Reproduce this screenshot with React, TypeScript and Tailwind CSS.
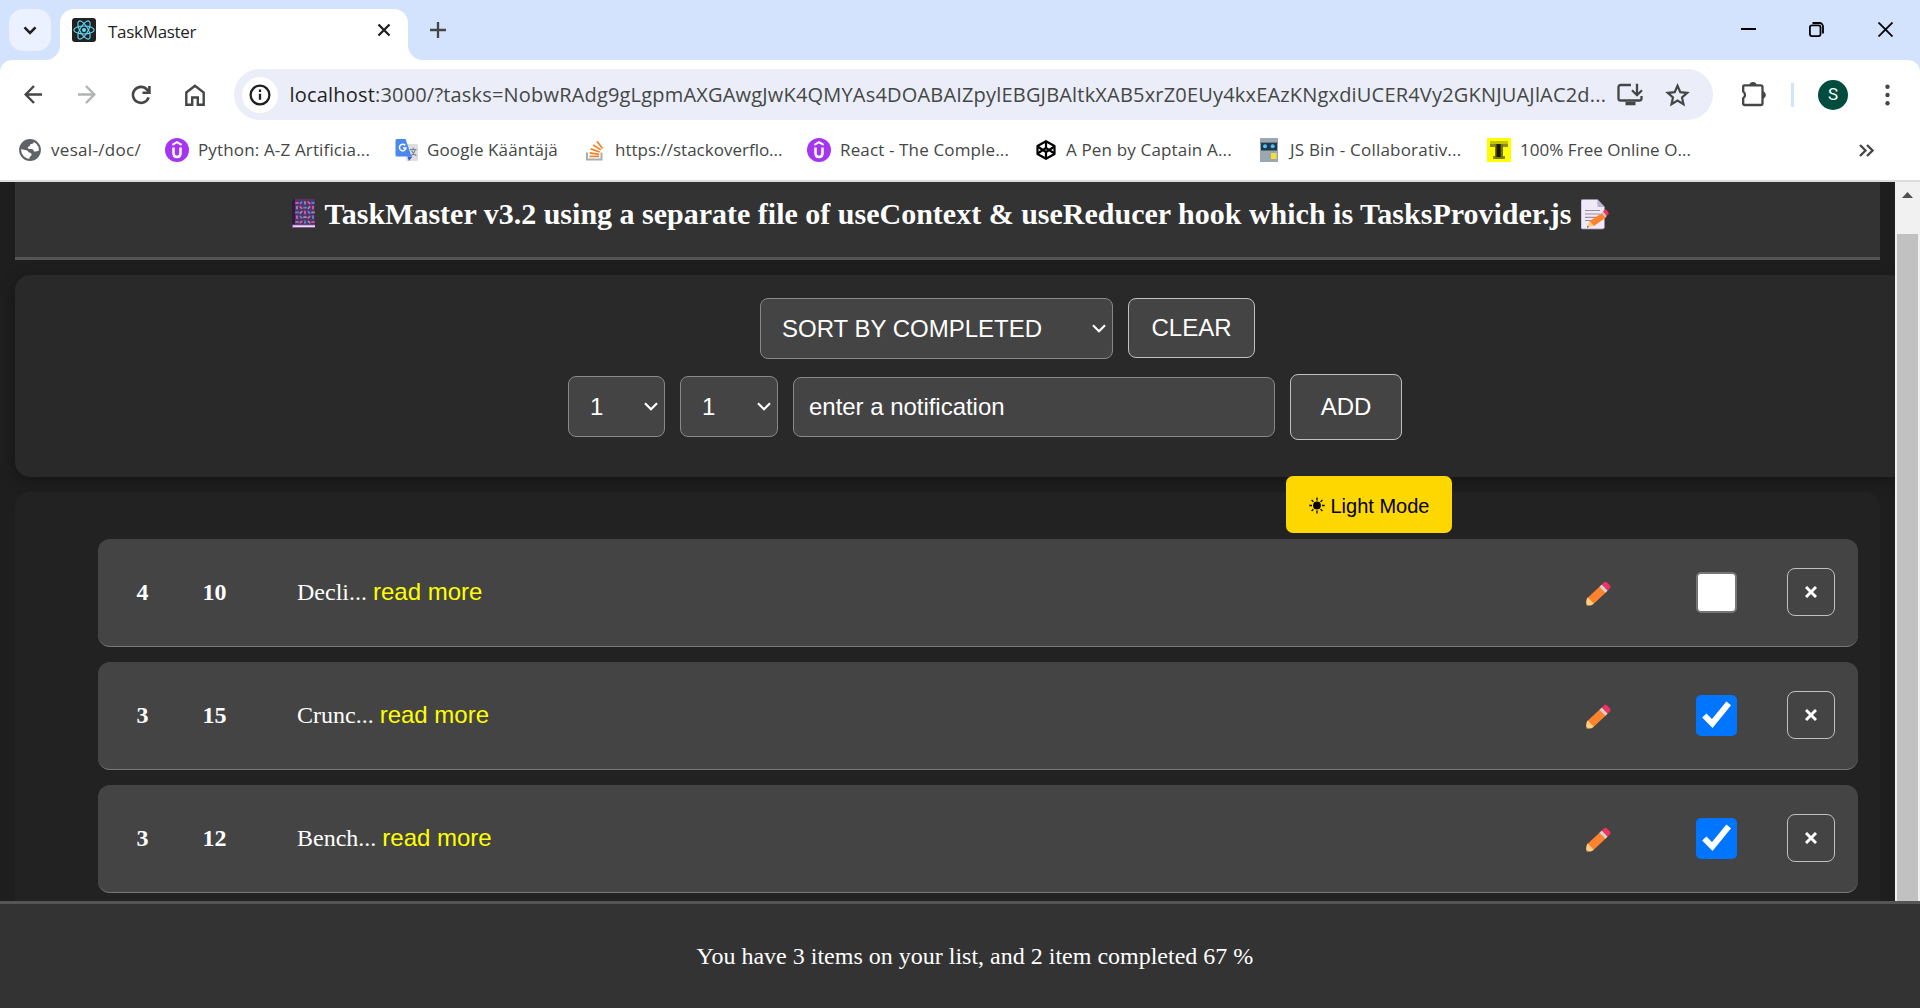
import type { ReactNode } from "react";

function ReactFavicon() {
  return (
    <svg width="24" height="24" viewBox="0 0 24 24" fill="none">
      <rect width="24" height="24" rx="3" fill="#222222" />
      <circle cx="12" cy="12" r="2" fill="#61dafb" />
      <g stroke="#61dafb" strokeWidth="1.1">
        <ellipse cx="12" cy="12" rx="10.2" ry="4" />
        <ellipse cx="12" cy="12" rx="10.2" ry="4" transform="rotate(60 12 12)" />
        <ellipse cx="12" cy="12" rx="10.2" ry="4" transform="rotate(120 12 12)" />
      </g>
    </svg>
  );
}

function GlobeIcon() {
  return (
    <svg width="22" height="22" viewBox="0 0 22 22" fill="none">
      <circle cx="11" cy="11" r="9.9" fill="#fff" stroke="#5f6368" strokeWidth="2" />
      <path
        d="M1.5 10C2 5 6 1.5 11 1.3c1.8 0 3 .4 4.2 1-.4 2-1.600 2.800-3.700 2.800-.3 1.800-1 2.700-2.800 2.900.2 1.700 1 2.200 3.300 2 2 .1 3 .9 2.800 2.600h2.200c1.200 0 2-.9 4-1 .2-2.600-.2-4.600-1.300-6.500.8 3 1.800 8-1 11.500-2 2.400-5.200 4-8.200 3.800-.6-1.600.5-3.300 2-3.900.2-1.800-.4-2.700-2.600-2.900-1.100-1.900-2-2.500-4-2.600z"
        fill="#5f6368"
      />
    </svg>
  );
}

function UdemyIcon() {
  return (
    <svg width="24" height="24" viewBox="0 0 24 24" fill="none" stroke="#fff">
      <circle cx="12" cy="12" r="12" fill="#a435f0" stroke="none" />
      <path d="M7.400 6.900 12 4.200l4.600 2.700" strokeWidth="2.100" />
      <path d="M8.500 9.600v5.600c0 2.300 1.300 3.700 3.500 3.700s3.500-1.400 3.500-3.700V9.600" strokeWidth="2.500" />
    </svg>
  );
}

function TranslateIcon() {
  return (
    <svg width="24" height="24" viewBox="0 0 24 24" fill="none">
      <rect x="11" y="6" width="12" height="17" rx="1.500" fill="#dedede" />
      <path d="M12.500 18.500h5l-3.600 4.500z" fill="#3a5bc7" />
      <path d="M2 1h8.500l6 17.500H2A1.500 1.500 0 0 1 .5 17V2.500A1.500 1.500 0 0 1 2 1z" fill="#4a87ee" />
      <path d="M10.300 7.400A3.300 3.300 0 1 0 11 10H8" stroke="#fff" strokeWidth="1.500" />
      <path d="M15 11.500h6.500M18.200 9.800v1.700M20.300 11.500c-.7 3-2.300 5-4.300 6.200M16.600 12.500c1 2.400 2.800 4.200 4.800 5.200" stroke="#6d8392" strokeWidth="1.100" />
    </svg>
  );
}

function StackOverflowIcon() {
  return (
    <svg width="18" height="21" viewBox="0 0 18 21" fill="none">
      <path d="M1 12.500v7h14.500v-7" stroke="#a9adb0" strokeWidth="2" />
      <g stroke="#f48024" strokeWidth="1.700">
        <path d="M3.500 16.400H13" />
        <path d="m3.700 12.800 9.400 1.500" />
        <path d="m4.700 8.900 9 3.100" />
        <path d="m7.100 5 7.800 4.900" />
        <path d="m10.900 1.200 5.600 7.200" />
      </g>
    </svg>
  );
}

function CodepenIcon() {
  return (
    <svg width="20" height="20" viewBox="0 0 20 20" fill="none" stroke="#000" strokeWidth="2.200" strokeLinejoin="round">
      <path d="M10 1.200 18.500 6v8L10 18.800 1.500 14V6z" />
      <path d="M1.500 6.500 10 12l8.500-5.500M1.500 13.500 10 8l8.500 5.500M10 1.200V8M10 12v6.800" />
    </svg>
  );
}

function JsBinIcon() {
  return (
    <svg width="18" height="24" viewBox="0 0 18 24">
      <rect width="18" height="24" fill="#9ba8b1" />
      <rect y="4" width="18" height="1" fill="#6f7f89" />
      <rect x="1" y="5" width="16" height="7.500" fill="#1f3a4a" />
      <circle cx="5" cy="8.300" r="2" fill="#4fc3f7" />
      <circle cx="12.700" cy="8.300" r="2" fill="#4fc3f7" />
      <rect x="11" y="15" width="5.500" height="6" fill="#f7dd35" />
    </svg>
  );
}

function HighlighterIcon() {
  return (
    <svg width="24" height="24" viewBox="0 0 24 24">
      <rect width="24" height="24" fill="#ffff00" />
      <path d="M3 3h18v3H3z" fill="#c4c400" />
      <path d="M3 6h3v3H3zM18 6h3v3h-3zM6 6h3v3H6zM15 6h3v3h-3zM6 18h3v3H6zM15 18h3v3h-3z" fill="#8c8c1a" />
      <path d="M8 6h8v15H8z" fill="#77771a" />
      <path d="M9.500 6h4.200v13H9.500z" fill="#1a1a08" />
    </svg>
  );
}

function NotebookEmoji() {
  const colors = ["#e85bb5", "#4c8df0", "#9a94a3"];
  const cells: ReactNode[] = [];
  for (let r = 0; r < 5; r++) {
    for (let c = 0; c < 5; c++) {
      const x = 5 + c * 4;
      const y = 3.800 + r * 4.800;
      cells.push(
        <path
          key={`${r}-${c}`}
          d={`M${x - 1} ${y}h2`}
          transform={`rotate(${((r * 2 + c * 3) % 4) * 45} ${x} ${y})`}
          stroke={colors[(r * 2 + c) % 3]}
          strokeWidth="1.700"
          strokeLinecap="round"
        />,
      );
    }
  }
  return (
    <svg width="24" height="30" viewBox="0 0 24 30" className="shrink-0">
      <path d="M2 0h20.500v26H1v3.500H0V2a2 2 0 0 1 2-2z" fill="#533566" />
      <path d="M0 1.500 1.500 0H3v25.500H0z" fill="#321b41" />
      <path d="M0 25.500h23V29H0z" fill="#7b4a95" />
      <path d="M1 26.300h22v1.800H1z" fill="#e6dfea" />
      {cells}
    </svg>
  );
}

function MemoEmoji() {
  return (
    <svg width="28" height="31" viewBox="0 0 28 31" className="shrink-0">
      <path d="M1.500.5h15L23.500 8v20a2 2 0 0 1-2 2h-20a1.500 1.500 0 0 1-1.500-1.500V2A1.500 1.500 0 0 1 1.500.5z" fill="#f0eaf7" stroke="#998ea4" strokeWidth=".8" />
      <path d="M16.300.5 23.500 8h-5.700a1.500 1.500 0 0 1-1.500-1.500z" fill="#bdb2cb" />
      <path d="M4 11.500h15M4 15h15M4 18.300h13M4 21.500h9" stroke="#998ea4" strokeWidth="1.200" />
      <path d="m21.400 13.700 3.600 4.900-12 8.400-4.200-1-.8-3.600z" fill="#ff822d" />
      <path d="m8.300 21.600 4.700 5.400-6.700 1.600z" fill="#ffce7c" />
      <path d="m20.300 13.400 2-1.500 3.800 5.200-2 1.500z" fill="#cdc4d6" />
      <path d="m22 12.200 1.200-1.200c.9-.8 1.800-.7 2.500.1l1.700 2.300c.6.9.4 1.700-.4 2.300l-1.400 1z" fill="#f92f60" />
      <path d="m6.700 26.600 1 1.600-1.600.4z" fill="#402a32" />
    </svg>
  );
}

function PencilEmoji() {
  return (
    <svg width="25" height="25" viewBox="0 0 25 25">
      <path d="m14.800 4.600 6 6L7.200 23.300.9 17.500z" fill="#ff822d" />
      <path d="m1.800 16.500 6 6.200c-1.500 1.600-3.700 1.800-6.900 1.700-.8 0-.9-.5-.8-1.300.1-2.800.2-5.100 1.700-6.600z" fill="#ffce7c" />
      <path d="m15.900 3.500 5.800 6-2.300 2.200-5.900-5.900z" fill="#d3d3d3" />
      <path d="m15.900 3.500 1.900-2c1-1 2.200-1 3.100-.1l2.900 2.900c1 1 .9 2.200 0 3.100l-2.100 2.100z" fill="#f92f60" />
      <path d="M.5 24.300 0 22.500l1.800 1.900z" fill="#5a3a2e" />
    </svg>
  );
}

function SunIcon() {
  return (
    <svg width="16" height="17" viewBox="0 0 16 17" className="shrink-0" stroke="#000" strokeWidth="1.300">
      <circle cx="8" cy="8.500" r="3.900" fill="#000" stroke="none" />
      <path d="M8 .5v3M8 13.500v3M.3 8.500h2.700M13 8.500h2.700M2.600 3l1.800 1.900M11.600 12.100l1.800 1.900M2.600 14l1.800-1.900M11.600 4.900 13.400 3" />
    </svg>
  );
}

function SelectChevron() {
  return (
    <svg width="14" height="9" viewBox="0 0 14 9" fill="none" stroke="#fff" strokeWidth="2.200" className="shrink-0">
      <path d="m1 1.300 6 6 6-6" />
    </svg>
  );
}

function TabStrip() {
  return (
    <div className="flex h-[60px] bg-[#d3e2fd]">
      <button className="ml-[9px] mt-[9px] flex h-[42px] w-[42px] items-center justify-center rounded-[14px] bg-[#ebf1fe]">
        <svg width="14" height="9" viewBox="0 0 14 9" fill="none" stroke="#1f1f1f" strokeWidth="2.600">
          <path d="m1.500 1.300 5.500 5.500 5.500-5.500" />
        </svg>
      </button>
      <div className="-ml-[6px] mt-[45px] h-[15px] w-[15px] bg-[radial-gradient(circle_at_0_0,transparent_14.5px,#fff_15.500px)]" />
      <div className="mt-[9px] flex h-[51px] w-[348px] items-center rounded-t-[14px] bg-white pb-[9px] pl-[12px]">
        <ReactFavicon />
        <span className="ml-[12px] mt-[3px] font-['Open_Sans'] text-[17px] tracking-[-0.3px] text-[#1f1f1f]">TaskMaster</span>
        <svg width="14" height="14" viewBox="0 0 14 14" stroke="#1f1f1f" strokeWidth="2.300" className="ml-auto mr-[17px]">
          <path d="m1.500 1.500 11 11M12.500 1.500l-11 11" />
        </svg>
      </div>
      <div className="mt-[45px] h-[15px] w-[15px] bg-[radial-gradient(circle_at_100%_0,transparent_14.500px,#fff_15.500px)]" />
      <svg width="16" height="16" viewBox="0 0 16 16" stroke="#444746" strokeWidth="2.300" className="ml-[7px] mt-[22px]">
        <path d="M8 0v16M0 8h16" />
      </svg>
      <svg width="15" height="15" viewBox="0 0 15 15" stroke="#000" strokeWidth="2" className="ml-auto mt-[22px]">
        <path d="M0 7h15" />
      </svg>
      <svg width="15" height="15" viewBox="0 0 15 15" fill="none" stroke="#000" strokeWidth="1.800" className="ml-[53px] mt-[22px]">
        <rect x=".9" y="3.300" width="10.600" height="10.800" rx="2" />
        <path d="M3.500 1h7a3.500 3.500 0 0 1 3.500 3.500v7" />
      </svg>
      <svg width="15" height="15" viewBox="0 0 15 15" stroke="#000" strokeWidth="1.800" className="ml-[54px] mr-[27px] mt-[22px]">
        <path d="m.5.500 14 14M14.500.5l-14 14" />
      </svg>
    </div>
  );
}

function AddressBar() {
  return (
    <div className="bg-[#d3e2fd]">
      <div className="flex h-[69px] items-center rounded-t-[12px] bg-white text-[#444746]">
        <svg width="18" height="19" viewBox="0 0 18 19" fill="none" stroke="#444746" strokeWidth="2.400" className="ml-[24px]">
          <path d="M18 9.500H2M10 1 1.700 9.500 10 18" />
        </svg>
        <svg width="18" height="19" viewBox="0 0 18 19" fill="none" stroke="#b1b2b2" strokeWidth="2.400" className="ml-[36px]">
          <path d="M0 9.500h16M8 1l8.300 8.500L8 18" />
        </svg>
        <svg width="20" height="20" viewBox="0 0 20 20" fill="none" stroke="#444746" strokeWidth="2.600" className="ml-[35px]">
          <path d="M17.600 12.300A8 8 0 1 1 16 4.600l1.600 1.800" />
          <path d="M18.400 1v6.800h-6.900" />
        </svg>
        <svg width="20" height="22" viewBox="0 0 20 22" fill="none" stroke="#444746" strokeWidth="2.400" className="ml-[34px]">
          <path d="M1.300 8.500 10 1.700l8.700 6.800v12.200h-5.900v-7.200H7.200v7.200H1.300z" />
        </svg>
        <div className="ml-[29px] flex h-[51px] w-[1479px] items-center rounded-full bg-[#ebeef8]">
          <div className="ml-[8px] flex h-[36px] w-[36px] shrink-0 items-center justify-center rounded-full bg-white">
            <svg width="22" height="22" viewBox="0 0 22 22" fill="none" stroke="#1f1f1f" strokeWidth="2.300">
              <circle cx="11" cy="11" r="9.400" />
              <path d="M11 9.800v6M11 5.600v2.300" />
            </svg>
          </div>
          <span className="ml-[11.5px] whitespace-nowrap font-['Open_Sans'] text-[20px] tracking-[0.185px]">
            <span className="text-[#1f1f1f]">localhost</span>
            :3000/?tasks=NobwRAdg9gLgpmAXGAwgJwK4QMYAs4DOABAIZpylEBGJBAltkXAB5xrZ0EUy4kxEAzKNgxdiUCER4Vy2GKNJUAJlAC2d...
          </span>
          <svg width="26" height="23" viewBox="0 0 26 23" fill="none" stroke="#444746" strokeWidth="2.300" className="ml-auto shrink-0">
            <path d="M14 2H3.500A2 2 0 0 0 1.500 4v11.500a2 2 0 0 0 2 2h19a2 2 0 0 0 2-2V13" />
            <path d="M8.500 20.500h10" strokeWidth="3.500" />
            <path d="M20 .8v11M15 7.300l5 4.900 5-4.900" />
          </svg>
          <svg width="25" height="24" viewBox="0 0 25 24" fill="none" stroke="#444746" strokeWidth="2.200" className="ml-[22px] mr-[23px] shrink-0">
            <path d="m12.500 2.800 2.800 6.400 6.900.6-5.200 4.600 1.500 6.800-6-3.600-6 3.600L8 14.400 2.800 9.800l6.900-.6z" />
          </svg>
        </div>
        <svg width="26" height="26" viewBox="0 0 26 26" fill="none" stroke="#444746" strokeWidth="2.300" className="mb-[2px] ml-[28px]">
          <path d="M3.500 4.300h16.200a1.800 1.800 0 0 1 1.800 1.800v16.100a1.800 1.800 0 0 1-1.800 1.800H3.500A1.300 1.300 0 0 1 2.200 22.700v-5.500a3.900 3.900 0 0 0 0-6.600V5.600a1.300 1.300 0 0 1 1.300-1.300z" />
          <path d="M9 4a3.100 3.100 0 0 1 6 0zM22 11a3.200 3.200 0 0 1 0 6z" fill="#444746" strokeWidth="1.600" />
        </svg>
        <div className="ml-[24px] h-[24px] w-[3px] bg-[#d3e2fd]" />
        <div className="ml-[24px] flex h-[30px] w-[30px] items-center justify-center rounded-full bg-[#004d40] font-[Roboto] text-[17px] text-white">S</div>
        <svg width="5" height="22" viewBox="0 0 5 22" fill="#444746" className="ml-[36.5px]">
          <circle cx="2.500" cy="2.700" r="2.200" />
          <circle cx="2.500" cy="11" r="2.200" />
          <circle cx="2.500" cy="19.300" r="2.200" />
        </svg>
      </div>
    </div>
  );
}

function Bookmark({ icon, className, children }: { icon: ReactNode; className: string; children: string }) {
  return (
    <div className={`flex shrink-0 items-center whitespace-nowrap ${className}`}>
      {icon}
      <span>{children}</span>
    </div>
  );
}

function BookmarksBar() {
  return (
    <div className="flex h-[53px] items-center border-b-2 border-[#dddddd] bg-white pb-[9px] pl-[19px] font-['Open_Sans'] text-[17px] text-[#444746]">
      <Bookmark icon={<GlobeIcon />} className="w-[146px] gap-[10px] tracking-[0.31px]">vesal-/doc/</Bookmark>
      <Bookmark icon={<UdemyIcon />} className="w-[230px] gap-[9px] tracking-[0.147px]">Python: A-Z Artificia...</Bookmark>
      <Bookmark icon={<TranslateIcon />} className="w-[191px] gap-[8px] tracking-[0.11px]">Google Kääntäjä</Bookmark>
      <Bookmark icon={<StackOverflowIcon />} className="w-[221px] gap-[11px]">https://stackoverflo...</Bookmark>
      <Bookmark icon={<UdemyIcon />} className="w-[229px] gap-[9px] tracking-[0.14px]">React - The Comple...</Bookmark>
      <Bookmark icon={<CodepenIcon />} className="w-[224px] gap-[10px] tracking-[0.16px]">A Pen by Captain A...</Bookmark>
      <Bookmark icon={<JsBinIcon />} className="w-[227px] gap-[12px] tracking-[0.2px]">JS Bin - Collaborativ...</Bookmark>
      <Bookmark icon={<HighlighterIcon />} className="gap-[9px] tracking-[0.04px]">100% Free Online O...</Bookmark>
      <svg width="15" height="13" viewBox="0 0 15 13" fill="none" stroke="#444746" strokeWidth="2.300" className="ml-auto mr-[46px]">
        <path d="m1 1 5.500 5.500L1 12M8 1l5.500 5.500L8 12" />
      </svg>
    </div>
  );
}

function NumberSelect({ className }: { className: string }) {
  return (
    <button className={`mb-px flex h-[61px] items-center justify-between rounded-[8px] border border-[#888888] bg-[#444444] pl-[21px] pr-[6px] ${className}`}>
      <span className="pt-px">1</span>
      <SelectChevron />
    </button>
  );
}

function Controls() {
  return (
    <section className="ml-[15px] mt-[15px] h-[202px] rounded-l-[15px] bg-[#292929] pt-[22px] font-['Liberation_Sans'] text-[24px] leading-none text-white shadow-[0_4px_15px_rgba(0,0,0,0.3)]">
      <div className="flex pl-[745px]">
        <button className="mt-px flex h-[61px] w-[353px] items-center justify-between rounded-[8px] border border-[#888888] bg-[#444444] pl-[21px] pr-[6px]">
          SORT BY COMPLETED
          <SelectChevron />
        </button>
        <button className="ml-[15px] mt-px h-[60px] w-[127px] rounded-[8px] border border-[#c0c0c0] bg-[#444444]">CLEAR</button>
      </div>
      <div className="mt-[15px] flex items-center pl-[553px]">
        <NumberSelect className="w-[97px]" />
        <NumberSelect className="ml-[15px] w-[98px]" />
        <div className="ml-[15px] flex h-[60px] w-[482px] items-center rounded-[8px] border border-[#888888] bg-[#444444] pl-[15px] tracking-[-0.03px]">enter a notification</div>
        <button className="ml-[15px] h-[66px] w-[112px] rounded-[8px] border border-[#c0c0c0] bg-[#444444]">ADD</button>
      </div>
    </section>
  );
}

const tasks = [
  { qty: 4, minutes: 10, title: "Decli...", done: false },
  { qty: 3, minutes: 15, title: "Crunc...", done: true },
  { qty: 3, minutes: 12, title: "Bench...", done: true },
];

function Checkbox({ checked }: { checked: boolean }) {
  if (!checked) {
    return <div className="h-[41px] w-[41px] rounded-[5px] border-[2.500px] border-[#767676] bg-white" />;
  }
  return (
    <div className="h-[41px] w-[41px] rounded-[5px] bg-[#0075ff]">
      <svg width="41" height="41" viewBox="0 0 41 41" fill="none" stroke="#fff" strokeWidth="6">
        <path d="m8.300 20.500 8 8L32.700 8.300" />
      </svg>
    </div>
  );
}

function TaskRow({ task }: { task: (typeof tasks)[number] }) {
  return (
    <li className="flex h-[108px] items-center rounded-[12px] border-b border-[#777777] bg-[#444444] pr-[23px] font-['Liberation_Serif'] text-[24px] text-white">
      <span className="mb-[2px] ml-[38.5px] w-[66px] font-bold">{task.qty}</span>
      <span className="mb-[2px] w-[94.5px] font-bold">{task.minutes}</span>
      <span className="mb-[2px]">
        {task.title} <button className="font-['Liberation_Sans'] text-[#ffff00]">read more</button>
      </span>
      <div className="ml-auto pt-px">
        <PencilEmoji />
      </div>
      <div className="ml-[85px]">
        <Checkbox checked={task.done} />
      </div>
      <button className="mb-[2px] ml-[50px] flex h-[48px] w-[48px] items-center justify-center rounded-[8px] border border-[#c0c0c0]">
        <svg width="12" height="12" viewBox="0 0 12 12" stroke="#fff" strokeWidth="2.900">
          <path d="m1 1 10 10M11 1 1 11" />
        </svg>
      </button>
    </li>
  );
}

export default function App() {
  return (
    <div className="flex h-[1008px] w-[1920px] flex-col overflow-hidden bg-[#1e1e1e]">
      <TabStrip />
      <AddressBar />
      <BookmarksBar />
      <div className="flex h-[719px] overflow-hidden">
        <main className="relative w-[1895px] overflow-hidden">
          <header className="mx-[15px] flex h-[78px] items-center border-b-[3px] border-[#555555] bg-[#333333] pb-[11px] pl-[277px] text-white">
            <NotebookEmoji />
            <h1 className="ml-[8.5px] mr-[9px] whitespace-nowrap font-['Liberation_Serif'] text-[30px] font-bold leading-[34px]">
              TaskMaster v3.2 using a separate file of useContext &amp; useReducer hook which is TasksProvider.js
            </h1>
            <MemoEmoji />
          </header>
          <Controls />
          <section className="relative mx-[15px] mt-[15px] h-[600px] rounded-[15px] bg-[#222222] pl-[83px] pr-[22px] pt-[47px]">
            <ul className="flex flex-col gap-[15px]">
              {tasks.map((task) => (
                <TaskRow key={task.title} task={task} />
              ))}
            </ul>
          </section>
          <button className="absolute left-[1286px] top-[294px] flex h-[57px] w-[166px] items-center rounded-[7px] bg-[#ffd700] pl-[23px] pt-[2px] font-['Liberation_Sans'] text-[20px] text-black">
            <SunIcon />
            <span className="ml-[5.5px] whitespace-nowrap">Light Mode</span>
          </button>
        </main>
        <div className="flex w-[25px] flex-col bg-[#f1f1f1] pl-[2px] pr-[2px]">
          <svg width="11" height="6" viewBox="0 0 11 6" fill="#505050" className="ml-[5px] mt-[10px]">
            <path d="M5.500 0 11 6H0z" />
          </svg>
          <div className="mt-[36px] flex-1 bg-[#c1c1c1]" />
        </div>
      </div>
      <footer className="flex h-[107px] items-center border-t-[3px] border-[#555555] bg-[#333333] pl-[696.5px] font-['Liberation_Serif'] text-[24px] text-white">
        You have 3 items on your list, and 2 item completed 67 %
      </footer>
    </div>
  );
}
